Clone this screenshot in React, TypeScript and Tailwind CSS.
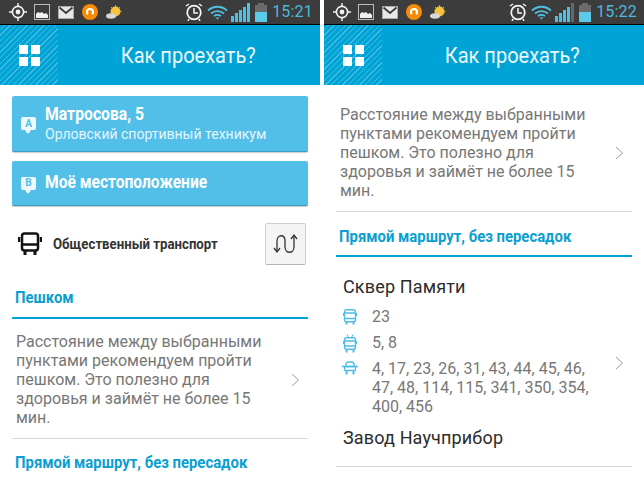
import React from 'react';

const Chevron = ({ className }: { className?: string }) => (
  <svg width="9" height="14" viewBox="0 0 9 14" fill="none" stroke="#9a9a9a" strokeWidth="1" className={className}>
    <path d="M1 1l6.5 6L1 13" />
  </svg>
);

const StatusBar = ({ time, lastBarDim }: { time: string; lastBarDim?: boolean }) => (
  <div className="h-[24px] bg-[#3c3c3c] flex items-center pl-[9px] pr-[7px]">
    <svg width="18" height="18" viewBox="0 0 18 18" fill="none" className="shrink-0">
      <circle cx="9" cy="9" r="5.6" stroke="#f2f2f2" strokeWidth="1.6" />
      <circle cx="9" cy="9" r="2.4" fill="#f2f2f2" />
      <path d="M9 0v3M9 15v3M0 9h3M15 9h3" stroke="#f2f2f2" strokeWidth="1.4" />
    </svg>
    <svg width="16" height="16" viewBox="0 0 16 16" className="ml-[7px] shrink-0">
      <rect x="0.5" y="0.5" width="15" height="15" fill="#3c3c3c" stroke="#bdbdbd" />
      <path d="M2 14V10l2-2 2 1 2-1 2 2 2-1 2 2v3z" fill="#f2f2f2" />
    </svg>
    <svg width="16" height="13" viewBox="0 0 16 13" className="ml-[8px] shrink-0">
      <rect x="0.5" y="0.5" width="15" height="12" fill="#e8e8e8" stroke="#aaaaaa" />
      <path d="M1.5 1.5L8 7l6.5-5.500" fill="none" stroke="#3c3c3c" strokeWidth="1.8" />
    </svg>
    <div className="ml-[8px] w-[16px] h-[16px] rounded-full bg-[#f58a07] flex items-center justify-center shrink-0">
      <div className="w-[8px] h-[8px] rounded-full border-2 border-white border-b-[#f58a07]" />
    </div>
    <svg width="16" height="15" viewBox="0 0 16 15" className="ml-[8px] shrink-0">
      <circle cx="9.5" cy="6.5" r="5" fill="#f7c33c" />
      <path d="M9.5 0v2M15.5 6.5h-2M14 2l-1.500 1.500M5 2l1.500 1.500" stroke="#e9a526" strokeWidth="1" />
      <ellipse cx="5" cy="11" rx="5" ry="2.8" fill="#d8d8d8" />
    </svg>
    <div className="flex-1" />
    <svg width="18" height="18" viewBox="0 0 18 18" fill="none" className="shrink-0">
      <circle cx="9" cy="9.5" r="6.8" stroke="#f4f4f4" strokeWidth="1.8" />
      <path d="M9 5v5h4" stroke="#f4f4f4" strokeWidth="1.5" />
      <path d="M1 3l3-2M17 3l-3-2M4 16l-1 2M14 16l1 2" stroke="#f4f4f4" strokeWidth="1.5" />
    </svg>
    <svg width="21" height="15" viewBox="0 0 21 15" fill="none" stroke="#4fc0e4" strokeWidth="1.8" className="ml-[4px] shrink-0">
      <path d="M1 5.5c5.500-5 13.500-5 19 0" />
      <path d="M4 8.5c3.800-3.200 9.200-3.200 13 0" />
      <path d="M7 11c2.200-1.500 4.800-1.500 7 0" />
      <path d="M8.500 12.500h4l-2 2z" fill="#4fc0e4" stroke="none" />
    </svg>
    <div className="ml-[3px] flex items-end gap-[1px] h-[19px] shrink-0">
      <div className="w-[3px] h-[6px] bg-[#4fc0e4]" />
      <div className="w-[3px] h-[9px] bg-[#4fc0e4]" />
      <div className="w-[3px] h-[12px] bg-[#4fc0e4]" />
      <div className="w-[3px] h-[15px] bg-[#4fc0e4]" />
      <div className={lastBarDim ? 'w-[3px] h-[19px] bg-[#666666]' : 'w-[3px] h-[19px] bg-[#4fc0e4]'} />
    </div>
    <div className="ml-[5px] w-[12px] h-[19px] flex flex-col items-center shrink-0">
      <div className="w-[6px] h-[2px] bg-[#6a6a6a]" />
      <div className="w-[12px] h-[7px] bg-[#6a6a6a]" />
      <div className="w-[12px] h-[10px] bg-[#5ccbe9]" />
    </div>
    <span className="ml-[5px] text-[16px] leading-none text-[#4fb8dc] tracking-[0.2px]">{time}</span>
  </div>
);

const Header = () => (
  <>
    <div className="h-[1px] bg-black" />
    <div className="h-[60px] bg-[#00a3d5] flex items-center">
      <div className="w-[58px] h-full flex items-center justify-center bg-[repeating-linear-gradient(135deg,#00a3d5_0px,#00a3d5_3px,#45bbe0_3px,#45bbe0_4px)]">
        <div className="grid grid-cols-2 gap-[3px]">
          <div className="w-[9px] h-[9px] bg-white" />
          <div className="w-[9px] h-[9px] bg-white" />
          <div className="w-[9px] h-[9px] bg-white" />
          <div className="w-[9px] h-[9px] bg-white" />
        </div>
      </div>
      <div className="flex-1 pl-[69px] text-[22px] text-[#eaf7fc] origin-left scale-x-[0.91]">Как проехать?</div>
    </div>
  </>
);

const SectionTitle = ({ children }: { children: React.ReactNode }) => (
  <div className="ml-[3px] text-[17px] font-bold leading-[20px] text-[#0a9fd0] origin-left scale-x-[0.875] whitespace-nowrap">{children}</div>
);

const WalkNote = () => (
  <div className="flex items-center">
    <p className="w-[260px] pl-[4px] text-[16px] leading-[19px] text-[#777777]">
      Расстояние между выбранными пунктами рекомендуем пройти пешком. Это полезно для здоровья и займёт не более 15 мин.
    </p>
    <Chevron className="ml-[19px]" />
  </div>
);

const PinBadge = ({ letter }: { letter: string }) => (
  <div className="relative w-[15px] h-[13px] rounded-[2px] bg-[#eef9fd] flex items-center justify-center text-[10px] leading-none font-bold text-[#52bfe9] shrink-0">
    {letter}
    <div className="absolute top-[12px] left-[5px] w-[4px] h-[4px] rotate-45 bg-[#eef9fd]" />
  </div>
);

const BusOutline = () => (
  <svg width="14" height="16" viewBox="0 0 14 16" fill="none" stroke="#4fbde9" strokeWidth="1.4" className="shrink-0">
    <rect x="1.5" y="0.8" width="11" height="12" rx="2" />
    <path d="M1.5 4h11M1.500 9.500h11M0.500 4v3M13.500 4v3" />
    <path d="M3.500 13v2.500M10.500 13v2.500" strokeWidth="2" />
  </svg>
);

const TrolleyOutline = () => (
  <svg width="14" height="19" viewBox="0 0 14 19" fill="none" stroke="#4fbde9" strokeWidth="1.4" className="shrink-0">
    <path d="M5.500 3.500L4 0.500M8.500 3.500l1.500-3" strokeWidth="1" />
    <rect x="1.5" y="3.8" width="11" height="11.500" rx="2" />
    <path d="M1.5 7h11M1.500 12h11M0.500 7v3M13.500 7v3" />
    <path d="M3.500 15.500v3M10.500 15.500v3" strokeWidth="2" />
  </svg>
);

const CarOutline = () => (
  <svg width="16" height="14" viewBox="0 0 16 14" fill="none" stroke="#4fbde9" strokeWidth="1.3" className="shrink-0">
    <path d="M3.500 5.500C3.500 2 5 1 6.500 1h3c1.500 0 3 1 3 4.500" />
    <rect x="2.5" y="5.500" width="11" height="4" rx="1" />
    <path d="M0 5.500h16" strokeWidth="1.6" />
    <path d="M4.500 10v3.500M11.500 10v3.500" strokeWidth="2" />
  </svg>
);

const LeftScreen = () => (
  <div className="w-[320px] h-[480px] overflow-hidden bg-white">
    <StatusBar time="15:21" />
    <Header />
    <div className="px-[12px] pt-[11px]">
      <div className="h-[56px] rounded-[2px] bg-[#52bfe9] border-b border-[#3c9cc4] flex items-center pl-[9px] text-white shadow-[0_1px_1px_rgba(0,0,0,0.2)]">
        <PinBadge letter="A" />
        <div className="ml-[9px]">
          <div className="text-[18px] leading-[22px] font-bold origin-left scale-x-[0.875]">Матросова, 5</div>
          <div className="text-[14px] leading-[19px] text-[#e6f6fc]">Орловский спортивный техникум</div>
        </div>
      </div>
      <div className="mt-[9px] h-[45px] rounded-[2px] bg-[#52bfe9] border-b border-[#3c9cc4] flex items-center pl-[9px] text-white shadow-[0_1px_1px_rgba(0,0,0,0.2)]">
        <PinBadge letter="B" />
        <div className="ml-[9px] mb-[3px] text-[18px] font-bold origin-left scale-x-[0.865]">Моё местоположение</div>
      </div>
      <div className="mt-[17px] h-[42px] flex items-center">
        <svg width="24" height="24" viewBox="0 0 24 24" fill="none" stroke="#111111" strokeWidth="2.5" className="ml-[6px] shrink-0">
          <rect x="4" y="1.5" width="16" height="17" rx="2.5" />
          <path d="M4 12.500h16" />
          <path d="M1 5v5M23 5v5" />
          <path d="M7 19v4M17 19v4" strokeWidth="3" />
        </svg>
        <span className="ml-[11px] text-[15px] font-bold text-[#333333] origin-left scale-x-[0.88]">Общественный транспорт</span>
        <div className="ml-auto mr-[2px] w-[41px] h-[42px] rounded-[2px] border border-[#cfcfcf] border-b-[#b5b5b5] bg-[#f4f4f4] flex items-center justify-center">
          <svg width="26" height="22" viewBox="0 0 26 22" fill="none" stroke="#333333" strokeWidth="1.3">
            <path d="M4 18V8c0-7 8-7 8 0v6c0 7 9 7 9 0V3" />
            <path d="M1 15l3 4 3-4M18 6l3-4 3 4" />
          </svg>
        </div>
      </div>
      <div className="mt-[22px]">
        <SectionTitle>Пешком</SectionTitle>
      </div>
      <div className="mt-[10px] h-[2px] bg-[#00a3d5]" />
      <div className="mt-[13px]">
        <WalkNote />
      </div>
      <div className="mt-[11px] h-[1px] bg-[#d8d8d8]" />
      <div className="mt-[13px]">
        <SectionTitle>Прямой маршрут, без пересадок</SectionTitle>
      </div>
    </div>
  </div>
);

const RightScreen = () => (
  <div className="w-[320px] h-[480px] overflow-hidden bg-white">
    <StatusBar time="15:22" lastBarDim />
    <Header />
    <div className="px-[12px]">
      <div className="mt-[20px]">
        <WalkNote />
      </div>
      <div className="mt-[11px] h-[1px] bg-[#d8d8d8]" />
      <div className="mt-[14px]">
        <SectionTitle>Прямой маршрут, без пересадок</SectionTitle>
      </div>
      <div className="mt-[9px] h-[2px] bg-[#00a3d5]" />
      <div className="mt-[18px] flex items-center">
        <div className="w-[276px] pl-[7px]">
          <div className="text-[18px] leading-[24px] text-[#2b2b2b] tracking-[0.15px]">Сквер Памяти</div>
          <div className="mt-[8px] flex items-center h-[20px] text-[#777777] text-[16px]">
            <div className="w-[29px]"><BusOutline /></div>
            <span>23</span>
          </div>
          <div className="mt-[6px] flex items-center h-[20px] text-[#777777] text-[16px]">
            <div className="w-[29px]"><TrolleyOutline /></div>
            <span>5, 8</span>
          </div>
          <div className="mt-[6px] flex items-start text-[#777777] text-[16px] leading-[19px]">
            <div className="w-[30px] pt-[2px] -ml-[1px]"><CarOutline /></div>
            <span className="w-[220px]">4, 17, 23, 26, 31, 43, 44, 45, 46, 47, 48, 114, 115, 341, 350, 354, 400, 456</span>
          </div>
          <div className="mt-[10px] text-[18px] leading-[24px] text-[#2b2b2b] tracking-[0.15px]">Завод Научприбор</div>
        </div>
        <Chevron className="ml-[3px]" />
      </div>
      <div className="mt-[16px] h-[1px] bg-[#d8d8d8]" />
    </div>
  </div>
);

export default function App() {
  return (
    <div className="w-[644px] h-[480px] flex gap-[4px] bg-white overflow-hidden font-['Roboto',sans-serif]">
      <LeftScreen />
      <RightScreen />
    </div>
  );
}
